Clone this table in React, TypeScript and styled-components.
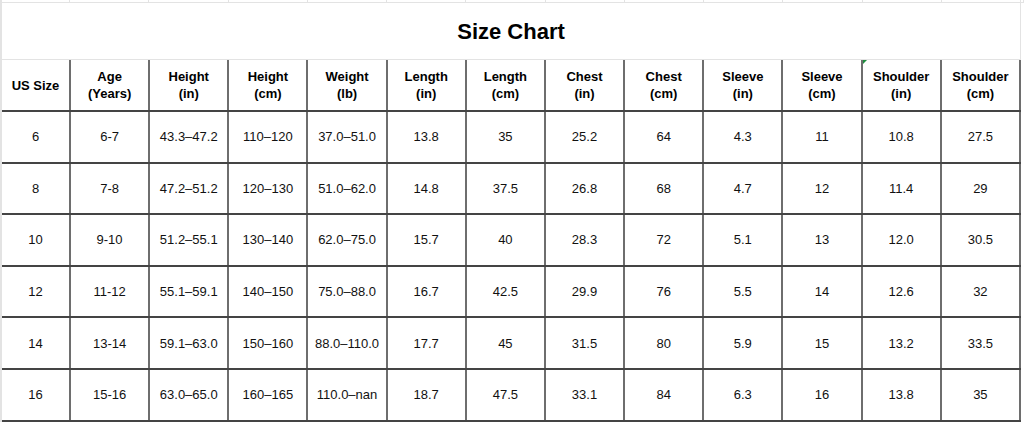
import React from "react";
import styled, { createGlobalStyle } from "styled-components";

const GlobalStyle = createGlobalStyle`
  html, body {
    margin: 0;
    padding: 0;
    background: #fff;
  }
  body {
    font-family: "Liberation Sans", Arial, sans-serif;
    color: #111;
  }
`;

const Sheet = styled.div`
  width: 1024px;
  height: 422px;
  overflow: hidden;
  box-sizing: border-box;
  border-left: 2px solid #e3e3e3;
  background: #fff;
`;

const TopStrip = styled.div`
  display: grid;
  grid-template-columns: 68px repeat(12, 1fr) 3px;
  width: 1022px;
  height: 2px;
  border-bottom: 1px solid #e3e3e3;
`;

const StripCell = styled.div`
  border-right: 1px solid #e3e3e3;
`;

const TitleRow = styled.div`
  display: flex;
  align-items: center;
  justify-content: center;
  width: 1019px;
  height: 57px;
  border-right: 1px solid #e3e3e3;
  border-bottom: 1px solid #e3e3e3;
  font-size: 22px;
  font-weight: 700;
  color: #000;
  padding-top: 2px;
  box-sizing: border-box;
`;

const Table = styled.table`
  border-collapse: collapse;
  table-layout: fixed;
  width: 1019px;
  font-size: 13px;
`;

const HeadCell = styled.th<{ $marker?: boolean }>`
  position: relative;
  height: 50px;
  padding: 0 2px;
  border-left: 2px solid #6e6e6e;
  border-right: 2px solid #6e6e6e;
  border-bottom: 2px solid #444;
  font-weight: 700;
  line-height: 17px;
  text-align: center;
  vertical-align: middle;
  color: #000;

  &:first-child {
    border-left: none;
  }

  ${(p) =>
    p.$marker &&
    `
    &::after {
      content: "";
      position: absolute;
      top: 0;
      left: 0;
      border-top: 4px solid #1e8e3e;
      border-right: 4px solid transparent;
    }
  `}
`;

const Cell = styled.td`
  height: 49.6px;
  padding: 0 2px;
  border-left: 2px solid #6e6e6e;
  border-right: 2px solid #6e6e6e;
  border-bottom: 2px solid #444;
  text-align: center;
  vertical-align: middle;
  white-space: nowrap;

  &:first-child {
    border-left: none;
  }
`;

const headers: [string, string?][] = [
  ["US Size"],
  ["Age", "(Years)"],
  ["Height", "(in)"],
  ["Height", "(cm)"],
  ["Weight", "(lb)"],
  ["Length", "(in)"],
  ["Length", "(cm)"],
  ["Chest", "(in)"],
  ["Chest", "(cm)"],
  ["Sleeve", "(in)"],
  ["Sleeve", "(cm)"],
  ["Shoulder", "(in)"],
  ["Shoulder", "(cm)"],
];

const rows = [
  ["6", "6-7", "43.3–47.2", "110–120", "37.0–51.0", "13.8", "35", "25.2", "64", "4.3", "11", "10.8", "27.5"],
  ["8", "7-8", "47.2–51.2", "120–130", "51.0–62.0", "14.8", "37.5", "26.8", "68", "4.7", "12", "11.4", "29"],
  ["10", "9-10", "51.2–55.1", "130–140", "62.0–75.0", "15.7", "40", "28.3", "72", "5.1", "13", "12.0", "30.5"],
  ["12", "11-12", "55.1–59.1", "140–150", "75.0–88.0", "16.7", "42.5", "29.9", "76", "5.5", "14", "12.6", "32"],
  ["14", "13-14", "59.1–63.0", "150–160", "88.0–110.0", "17.7", "45", "31.5", "80", "5.9", "15", "13.2", "33.5"],
  ["16", "15-16", "63.0–65.0", "160–165", "110.0–nan", "18.7", "47.5", "33.1", "84", "6.3", "16", "13.8", "35"],
];

const App = () => {
  return (
    <>
      <GlobalStyle />
      <Sheet>
        <TopStrip>
          {Array.from({ length: 14 }).map((_, i) => (
            <StripCell key={i} />
          ))}
        </TopStrip>
        <TitleRow>Size Chart</TitleRow>
        <Table>
          <colgroup>
            <col style={{ width: 68 }} />
            {headers.slice(1).map((_, i) => (
              <col key={i} />
            ))}
          </colgroup>
          <thead>
            <tr>
              {headers.map(([top, bottom], i) => (
                <HeadCell key={i} $marker={i === 11}>
                  {top}
                  {bottom && (
                    <>
                      <br />
                      {bottom}
                    </>
                  )}
                </HeadCell>
              ))}
            </tr>
          </thead>
          <tbody>
            {rows.map((row, r) => (
              <tr key={r}>
                {row.map((value, c) => (
                  <Cell key={c}>{value}</Cell>
                ))}
              </tr>
            ))}
          </tbody>
        </Table>
      </Sheet>
    </>
  );
};

export default App;
